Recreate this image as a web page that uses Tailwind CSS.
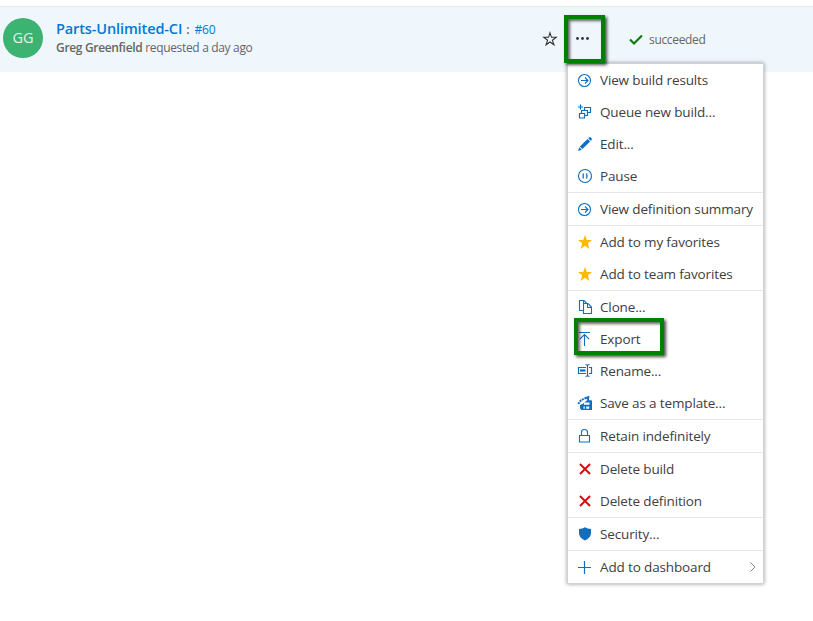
<!DOCTYPE html>
<html lang="en">
<head>
<meta charset="utf-8">
<title>Builds</title>
<script src="https://cdn.jsdelivr.net/npm/@tailwindcss/browser@4"></script>
</head>
<body class="relative h-[621px] w-[813px] overflow-hidden bg-white font-['Segoe_UI','Open_Sans','Noto_Sans',sans-serif] text-[#404040]">
<svg class="hidden">
  <symbol id="go" viewBox="0 0 16 16"><g fill="none" stroke="#106ebe" stroke-width="1.1"><circle cx="7.5" cy="8.5" r="6"/><path d="M4 8.5h7M8 5.5l3 3-3 3"/></g></symbol>
  <symbol id="queue" viewBox="0 0 16 16"><g fill="none" stroke="#106ebe" stroke-width="1.2"><path d="M3.500 .5v5M1 3h5M7.500 6.500v-3h6v5h-3M4.500 9.500v-3h6v5h-3M2.500 9.500h5v4.500h-5z"/></g></symbol>
  <symbol id="edit" viewBox="0 0 16 16"><path fill="#106ebe" d="M1 15l1.300-3.800 2.500 2.500zM2.900 10.600l7.700-7.700 2.500 2.500-7.700 7.700zM11.200 2.300l.9-.9q.8-.7 1.700.1l.7.700q.8.900.1 1.700l-.9.900z"/></symbol>
  <symbol id="pause" viewBox="0 0 16 16"><g fill="none" stroke="#106ebe" stroke-width="1.1"><circle cx="8" cy="8" r="6.500"/><path stroke-width="1.300" d="M6.200 5.500v5M9.800 5.500v5"/></g></symbol>
  <symbol id="star" viewBox="0 0 16 16"><path fill="#ffb900" d="M8 1l1.800 4.900 5.200.1-4.100 3.200L12.400 15 8 11.800 3.600 15l1.500-5.800L1 6l5.200-.1z"/></symbol>
  <symbol id="clone" viewBox="0 0 16 16"><g fill="none" stroke="#106ebe" stroke-width="1.1"><path d="M6 11.500H2.500v-10h4.500l2.500 2.500M6.500 1.500v3"/><path d="M6.500 4.500h4.500l3.500 3.500v6.500h-8zM10.500 4.500v4h4"/></g></symbol>
  <symbol id="export" viewBox="0 0 16 16"><path fill="none" stroke="#106ebe" stroke-width="1.1" d="M2 1.500h11M7.500 15V4M2.800 8.200l4.700-4.700 4.700 4.700"/></symbol>
  <symbol id="rename" viewBox="0 0 16 16"><g fill="none" stroke="#106ebe" stroke-width="1.2"><path d="M9 4.500H1.500v6H9M12 4.500h2.500v6H12M8.500 1.500q2 0 2 1.500v9q0 1.500-2 1.500M12.500 1.500q-2 0-2 1.500M12.500 13.500q-2 0-2-1.500"/><path stroke-width="2.200" d="M3 7.500h5.500"/></g></symbol>
  <symbol id="save" viewBox="0 0 16 16"><path fill="#106ebe" fill-rule="evenodd" d="M8.500 2L12.500 .8l-.6 4.400h2.600l.5 .8v9H4.500L3 13.500V10l2.500-1L10.500 5zM7 7.500v2.200h5.500V7.500zM6.500 11.500v2.300h1.300v-2.300h1.400v2.300h3v-2.300z"/><path fill="none" stroke="#106ebe" stroke-width="2" stroke-dasharray="2 .8" d="M1.500 9Q3 4.500 9.500 3"/></symbol>
  <symbol id="lock" viewBox="0 0 16 16"><path fill="none" stroke="#106ebe" stroke-width="1.100" d="M2.500 7.500h10v6.500h-10zM4.500 7.500V4.300q0-2.800 3-2.800t3 2.800v3.200"/></symbol>
  <symbol id="delete" viewBox="0 0 16 16"><path fill="none" stroke="#e00b0b" stroke-width="2" d="M3 3l10 10M13 3L3 13"/></symbol>
  <symbol id="shield" viewBox="0 0 16 16"><path fill="#106ebe" d="M8 1.300q2.400 1.600 6 1.700v4q0 5-6 7.500Q2 12 2 7V3q3.600-.1 6-1.700z"/></symbol>
  <symbol id="plus" viewBox="0 0 16 16"><path stroke="#106ebe" stroke-width="1.200" d="M7.500 2v13M1 8.500h13"/></symbol>
</svg>

<header class="mt-[6px] flex h-[66px] border-t border-[#e6e8ea] bg-[#eff6fc]">
  <div class="ml-[3px] mt-[11px] flex h-10 w-10 shrink-0 items-center justify-center rounded-full bg-[#3cb371] text-[14.500px] text-[#e2f4e9]"><span>GG</span></div>
  <div class="ml-[13px] mt-[12px] w-[486px]">
    <div class="flex h-5 items-baseline leading-5 text-[#0078d7]"><span class="text-[14.500px] font-semibold tracking-[-0.12px]">Parts-Unlimited-CI</span><span class="ml-[4px] text-[12px] font-semibold text-[#666]">:</span><span class="ml-[5px] text-[12px] tracking-[-0.2px]">#60</span></div>
    <div class="h-[18px] text-[12px] leading-[18px] tracking-[-0.33px] text-[#666]"><span class="font-semibold">Greg Greenfield</span> requested a day ago</div>
  </div>
  <svg class="mt-[24px] h-4 w-4" viewBox="0 0 16 16"><path fill="none" stroke="#333" stroke-width="1.100" d="M8 1.800l1.500 4.500h4.700l-3.800 2.900 1.500 4.600L8 11l-3.900 2.800 1.500-4.600-3.800-2.900h4.700z"/></svg>
  <svg class="ml-[16px] mt-[25px] h-4 w-4" viewBox="0 0 16 16" fill="#333"><circle cx="3.500" cy="6.500" r="1.400"/><circle cx="8.500" cy="6.500" r="1.400"/><circle cx="13.500" cy="6.500" r="1.400"/></svg>
  <svg class="ml-[38px] mt-[25px] h-4 w-4" viewBox="0 0 16 16"><path fill="none" stroke="#107c10" stroke-width="2.200" d="M2 7.500l4 4 8-8"/></svg>
  <span class="ml-[5px] mt-[24px] text-[12px] leading-[18px] tracking-[-0.33px] text-[#666]">succeeded</span>
</header>

<nav class="absolute left-[567px] top-[63px] w-[197px] border border-[#d2d2d2] bg-white text-[13.500px] tracking-[-0.14px] shadow-[0_0_4px_rgba(0,0,0,0.4)]">
  <ul class="border-b border-[#e6e6e6]">
    <li class="flex h-8 items-center pl-[9px]"><svg class="mr-[7px] h-4 w-4"><use href="#go"/></svg><span>View build results</span></li>
    <li class="flex h-8 items-center pl-[9px]"><svg class="mr-[7px] h-4 w-4"><use href="#queue"/></svg><span>Queue new build...</span></li>
    <li class="flex h-8 items-center pl-[9px]"><svg class="mr-[7px] h-4 w-4"><use href="#edit"/></svg><span>Edit...</span></li>
    <li class="flex h-8 items-center pl-[9px]"><svg class="mr-[7px] h-4 w-4"><use href="#pause"/></svg><span>Pause</span></li>
  </ul>
  <ul class="border-b border-[#e6e6e6]">
    <li class="flex h-8 items-center whitespace-nowrap pl-[9px]"><svg class="mr-[7px] h-4 w-4 shrink-0"><use href="#go"/></svg><span>View definition summary</span></li>
  </ul>
  <ul class="border-b border-[#e6e6e6]">
    <li class="flex h-8 items-center pl-[9px]"><svg class="mr-[7px] h-4 w-4"><use href="#star"/></svg><span>Add to my favorites</span></li>
    <li class="flex h-8 items-center pl-[9px]"><svg class="mr-[7px] h-4 w-4"><use href="#star"/></svg><span>Add to team favorites</span></li>
  </ul>
  <ul class="border-b border-[#e6e6e6]">
    <li class="flex h-8 items-center pl-[9px]"><svg class="mr-[7px] h-4 w-4"><use href="#clone"/></svg><span>Clone...</span></li>
    <li class="flex h-8 items-center pl-[9px]"><svg class="mr-[7px] h-4 w-4"><use href="#export"/></svg><span>Export</span></li>
    <li class="flex h-8 items-center pl-[9px]"><svg class="mr-[7px] h-4 w-4"><use href="#rename"/></svg><span>Rename...</span></li>
    <li class="flex h-8 items-center pl-[9px]"><svg class="mr-[7px] h-4 w-4"><use href="#save"/></svg><span>Save as a template...</span></li>
  </ul>
  <ul class="border-b border-[#e6e6e6]">
    <li class="flex h-8 items-center pl-[9px]"><svg class="mr-[7px] h-4 w-4"><use href="#lock"/></svg><span>Retain indefinitely</span></li>
  </ul>
  <ul class="border-b border-[#e6e6e6]">
    <li class="flex h-8 items-center pl-[9px]"><svg class="mr-[7px] h-4 w-4"><use href="#delete"/></svg><span>Delete build</span></li>
    <li class="flex h-8 items-center pl-[9px]"><svg class="mr-[7px] h-4 w-4"><use href="#delete"/></svg><span>Delete definition</span></li>
  </ul>
  <ul class="border-b border-[#e6e6e6]">
    <li class="flex h-8 items-center pl-[9px]"><svg class="mr-[7px] h-4 w-4"><use href="#shield"/></svg><span>Security...</span></li>
  </ul>
  <ul>
    <li class="flex h-8 items-center pl-[9px] pr-[5px]"><svg class="mr-[7px] h-4 w-4"><use href="#plus"/></svg><span>Add to dashboard</span><svg class="ml-auto h-3 w-[10px]" viewBox="0 0 10 12"><path fill="none" stroke="#888" d="M2.500 1.500L7 6l-4.500 4.500"/></svg></li>
  </ul>
</nav>
<div class="absolute left-[564px] top-[15px] h-[48px] w-[41px] border-4 border-[#008000] shadow-[2px_2px_3px_rgba(0,0,0,0.7),inset_2px_2px_3px_rgba(0,0,0,0.6)]"></div>
<div class="absolute left-[574px] top-[318px] h-[37px] w-[90px] border-4 border-[#008000] shadow-[2px_2px_3px_rgba(0,0,0,0.7),inset_2px_2px_3px_rgba(0,0,0,0.6)]"></div>
</body>
</html>
